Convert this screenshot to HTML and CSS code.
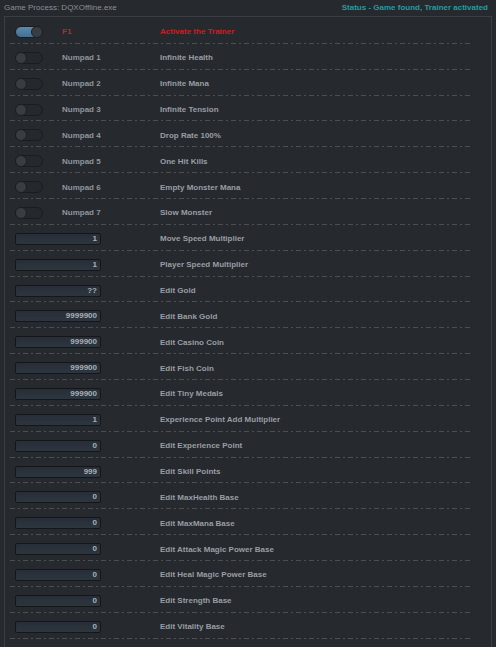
FILE: index.html
```html
<!DOCTYPE html>
<html>
<head>
<meta charset="utf-8">
<link rel="stylesheet" href="styles.css">
</head>
<body>
<div class="header">
  <span class="process">Game Process: DQXOffline.exe</span>
  <span class="status">Status - Game found, Trainer activated</span>
</div>
<div class="panel">
  <div class="row active"><span class="toggle on"><span class="knob"></span></span><span class="key">F1</span><span class="desc">Activate the Trainer</span></div>
  <div class="row"><span class="toggle"><span class="knob"></span></span><span class="key">Numpad 1</span><span class="desc">Infinite Health</span></div>
  <div class="row"><span class="toggle"><span class="knob"></span></span><span class="key">Numpad 2</span><span class="desc">Infinite Mana</span></div>
  <div class="row"><span class="toggle"><span class="knob"></span></span><span class="key">Numpad 3</span><span class="desc">Infinite Tension</span></div>
  <div class="row"><span class="toggle"><span class="knob"></span></span><span class="key">Numpad 4</span><span class="desc">Drop Rate 100%</span></div>
  <div class="row"><span class="toggle"><span class="knob"></span></span><span class="key">Numpad 5</span><span class="desc">One Hit Kills</span></div>
  <div class="row"><span class="toggle"><span class="knob"></span></span><span class="key">Numpad 6</span><span class="desc">Empty Monster Mana</span></div>
  <div class="row"><span class="toggle"><span class="knob"></span></span><span class="key">Numpad 7</span><span class="desc">Slow Monster</span></div>
  <div class="row"><span class="field">1</span><span class="desc">Move Speed Multiplier</span></div>
  <div class="row"><span class="field">1</span><span class="desc">Player Speed Multiplier</span></div>
  <div class="row"><span class="field">??</span><span class="desc">Edit Gold</span></div>
  <div class="row"><span class="field">9999900</span><span class="desc">Edit Bank Gold</span></div>
  <div class="row"><span class="field">999900</span><span class="desc">Edit Casino Coin</span></div>
  <div class="row"><span class="field">999900</span><span class="desc">Edit Fish Coin</span></div>
  <div class="row"><span class="field">999900</span><span class="desc">Edit Tiny Medals</span></div>
  <div class="row"><span class="field">1</span><span class="desc">Experience Point Add Multiplier</span></div>
  <div class="row"><span class="field">0</span><span class="desc">Edit Experience Point</span></div>
  <div class="row"><span class="field">999</span><span class="desc">Edit Skill Points</span></div>
  <div class="row"><span class="field">0</span><span class="desc">Edit MaxHealth Base</span></div>
  <div class="row"><span class="field">0</span><span class="desc">Edit MaxMana Base</span></div>
  <div class="row"><span class="field">0</span><span class="desc">Edit Attack Magic Power Base</span></div>
  <div class="row"><span class="field">0</span><span class="desc">Edit Heal Magic Power Base</span></div>
  <div class="row"><span class="field">0</span><span class="desc">Edit Strength Base</span></div>
  <div class="row"><span class="field">0</span><span class="desc">Edit Vitality Base</span></div>
  <div class="row"><span class="field"></span></div>
</div>
</body>
</html>
```
FILE: styles.css
```css
html, body {
  margin: 0;
  padding: 0;
  background: #26292e;
  overflow: hidden;
}
body {
  font-family: "Liberation Sans", Arial, sans-serif;
  font-size: 8px;
  color: #989ea4;
  height: 647px;
}
.header {
  display: flex;
  justify-content: space-between;
  align-items: center;
  height: 16px;
  padding: 0 8px 0 4px;
  box-sizing: border-box;
}
.process {
  color: #8b9197;
  padding-bottom: 2px;
}
.status {
  color: #1f9fa2;
  font-weight: bold;
  padding-bottom: 2px;
}
.panel {
  margin: 0 4px;
  border: 1px solid #3b3e43;
  padding-top: 1px;
  height: 800px;
}
.row {
  display: grid;
  grid-template-columns: 47px 98px 1fr;
  align-items: center;
  height: 25.87px;
  box-sizing: border-box;
  padding: 3px 0 1px 5px;
  margin: 0 21px 0 5px;
  font-weight: bold;
  background-image: repeating-linear-gradient(to right, #4b4e53 0 5px, transparent 5px 8px, #4b4e53 8px 10px, transparent 10px 13px);
  background-size: 100% 1px;
  background-position: left bottom;
  background-repeat: no-repeat;
}
.key {
  color: #8d969f;
  white-space: nowrap;
}
.desc {
  grid-column: 3;
  white-space: nowrap;
}
.active .key, .active .desc {
  color: #d41b1d;
}
.toggle {
  position: relative;
  display: block;
  width: 28px;
  height: 12px;
  box-sizing: border-box;
  border-radius: 6px;
  border: 1px solid #1a1d20;
  background: #25282c;
}
.toggle .knob {
  position: absolute;
  top: -1px;
  left: -1px;
  width: 12px;
  height: 12px;
  box-sizing: border-box;
  border-radius: 50%;
  background: #393c41;
  border: 1px solid #1c1f22;
}
.toggle.on {
  background: linear-gradient(#5a8ab0, #456f92);
}
.toggle.on .knob {
  left: auto;
  right: -1px;
}
.field {
  grid-column: 1 / 3;
  display: block;
  width: 86px;
  height: 12px;
  box-sizing: border-box;
  border: 1px solid #14171a;
  border-radius: 2px;
  background: linear-gradient(#272e37, #2d353f);
  color: #a9b0b7;
  text-align: right;
  padding-right: 3px;
  line-height: 10px;
}
```
